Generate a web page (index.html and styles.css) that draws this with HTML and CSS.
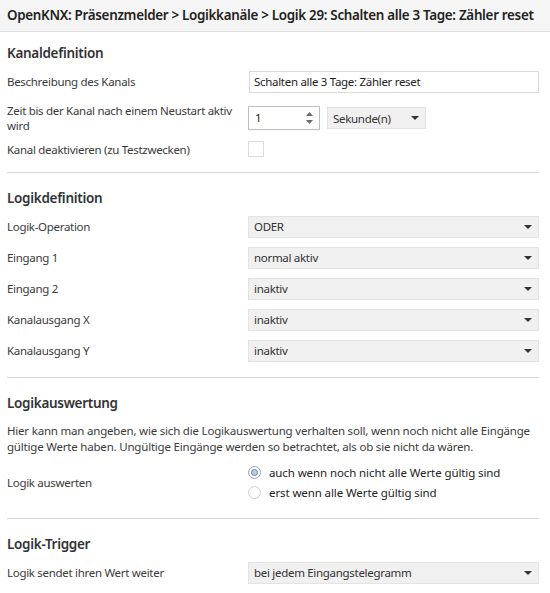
FILE: index.html
```html
<!DOCTYPE html>
<html lang="de">
<head>
<meta charset="utf-8">
<title>OpenKNX Logik 29</title>
<link rel="stylesheet" href="styles.css">
</head>
<body>
<div class="titlebar">OpenKNX: Präsenzmelder &gt; Logikkanäle &gt; Logik 29: Schalten alle 3 Tage: Zähler reset</div>

<div class="section first">
  <div class="heading">Kanaldefinition</div>
  <div class="row">
    <div class="label">Beschreibung des Kanals</div>
    <div class="control"><div class="textbox">Schalten alle 3 Tage: Zähler reset</div></div>
  </div>
  <div class="row tall">
    <div class="label">Zeit bis der Kanal nach einem Neustart aktiv wird</div>
    <div class="control inline">
      <div class="number">
        <span>1</span>
        <span class="spin">
          <svg width="7" height="4" viewBox="0 0 7 4"><polygon points="0,4 7,4 3.5,0" fill="#6b6b6b"/></svg>
          <svg width="7" height="4" viewBox="0 0 7 4"><polygon points="0,0 7,0 3.5,4" fill="#6b6b6b"/></svg>
        </span>
      </div>
      <div class="select small"><span>Sekunde(n)</span><svg class="arrow" width="8" height="4" viewBox="0 0 8 4"><polygon points="0,0 8,0 4,4" fill="#333"/></svg></div>
    </div>
  </div>
  <div class="row check">
    <div class="label">Kanal deaktivieren (zu Testzwecken)</div>
    <div class="control"><div class="checkbox"></div></div>
  </div>
</div>

<div class="section">
  <div class="heading">Logikdefinition</div>
  <div class="row">
    <div class="label">Logik-Operation</div>
    <div class="control"><div class="select"><span>ODER</span><svg class="arrow" width="8" height="4" viewBox="0 0 8 4"><polygon points="0,0 8,0 4,4" fill="#333"/></svg></div></div>
  </div>
  <div class="row">
    <div class="label">Eingang 1</div>
    <div class="control"><div class="select"><span>normal aktiv</span><svg class="arrow" width="8" height="4" viewBox="0 0 8 4"><polygon points="0,0 8,0 4,4" fill="#333"/></svg></div></div>
  </div>
  <div class="row">
    <div class="label">Eingang 2</div>
    <div class="control"><div class="select"><span>inaktiv</span><svg class="arrow" width="8" height="4" viewBox="0 0 8 4"><polygon points="0,0 8,0 4,4" fill="#333"/></svg></div></div>
  </div>
  <div class="row">
    <div class="label">Kanalausgang X</div>
    <div class="control"><div class="select"><span>inaktiv</span><svg class="arrow" width="8" height="4" viewBox="0 0 8 4"><polygon points="0,0 8,0 4,4" fill="#333"/></svg></div></div>
  </div>
  <div class="row">
    <div class="label">Kanalausgang Y</div>
    <div class="control"><div class="select"><span>inaktiv</span><svg class="arrow" width="8" height="4" viewBox="0 0 8 4"><polygon points="0,0 8,0 4,4" fill="#333"/></svg></div></div>
  </div>
</div>

<div class="section eval">
  <div class="heading">Logikauswertung</div>
  <p class="info">Hier kann man angeben, wie sich die Logikauswertung verhalten soll, wenn noch nicht alle Eingänge gültige Werte haben. Ungültige Eingänge werden so betrachtet, als ob sie nicht da wären.</p>
  <div class="row radios">
    <div class="label">Logik auswerten</div>
    <div class="control">
      <div class="radio-opt"><span class="radio on"></span>auch wenn noch nicht alle Werte gültig sind</div>
      <div class="radio-opt"><span class="radio"></span>erst wenn alle Werte gültig sind</div>
    </div>
  </div>
</div>

<div class="section last">
  <div class="heading">Logik-Trigger</div>
  <div class="row">
    <div class="label">Logik sendet ihren Wert weiter</div>
    <div class="control"><div class="select"><span>bei jedem Eingangstelegramm</span><svg class="arrow" width="8" height="4" viewBox="0 0 8 4"><polygon points="0,0 8,0 4,4" fill="#333"/></svg></div></div>
  </div>
</div>
</body>
</html>
```
FILE: styles.css
```css
html, body {
  margin: 0;
  padding: 0;
  background: #ffffff;
}
body {
  font-family: "Noto Sans", "Open Sans", sans-serif;
  font-size: 11.5px;
  letter-spacing: -0.3px;
  color: #3a3a3a;
  width: 550px;
  height: 593px;
  overflow: hidden;
}
.titlebar {
  height: 31px;
  line-height: 31px;
  padding-left: 7px;
  background: #f5f5f5;
  border-bottom: 1px solid #dedede;
  font-size: 13.4px;
  font-weight: 600;
  color: #222;
  white-space: nowrap;
  letter-spacing: -0.3px;
}
.section {
  margin: 0 11px 0 7px;
  padding: 15px 0 11px;
  border-bottom: 1px solid #d6d6d6;
}
.section.first {
  padding-top: 11px;
  padding-bottom: 12px;
}
.section.eval {
  padding-bottom: 16px;
}
.section.last {
  border-bottom: none;
  padding-bottom: 0;
}
.heading {
  height: 20px;
  line-height: 20px;
  font-size: 13.5px;
  font-weight: 600;
  color: #333;
  margin-bottom: 3px;
  letter-spacing: -0.3px;
}
.row {
  display: grid;
  grid-template-columns: 241px 1fr;
  align-items: center;
  height: 31px;
}
.row.tall {
  height: 41px;
}
.row.check {
  height: 22px;
}
.row.radios {
  height: 40px;
  margin-top: 7px;
}
.label {
  line-height: 15px;
  padding-right: 6px;
}
.control {
  min-width: 0;
}
.control.inline {
  display: flex;
  align-items: center;
  gap: 7px;
}
.textbox {
  height: 22px;
  box-sizing: border-box;
  border: 1px solid #dadada;
  margin-left: 1px;
  width: 290px;
  padding-left: 4px;
  line-height: 20px;
  color: #222;
}
.number {
  width: 72px;
  height: 24px;
  box-sizing: border-box;
  border: 1px solid #bdbdbd;
  display: flex;
  align-items: center;
  justify-content: space-between;
  padding: 0 6px 0 6px;
  color: #222;
}
.spin {
  display: flex;
  flex-direction: column;
  gap: 4px;
}
.spin svg {
  display: block;
}
.select {
  height: 22px;
  box-sizing: border-box;
  width: 291px;
  background: #f0f0f0;
  border: 1px solid #e3e3e3;
  display: flex;
  align-items: center;
  justify-content: space-between;
  padding: 0 6px 0 5px;
  color: #333;
}
.select.small {
  width: 99px;
  margin-top: 1px;
}
.arrow {
  display: block;
}
.checkbox {
  width: 16px;
  height: 16px;
  box-sizing: border-box;
  border: 1px solid #dcdcdc;
  background: #fff;
}
.info {
  margin: 10px 0 0;
  line-height: 16px;
  color: #3a3a3a;
  letter-spacing: -0.2px;
}
.radio-opt {
  display: flex;
  align-items: center;
  height: 20px;
  gap: 8px;
  color: #222;
  letter-spacing: -0.1px;
}
.radio {
  width: 13px;
  height: 13px;
  box-sizing: border-box;
  border-radius: 50%;
  border: 1px solid #cfcfcf;
  background: #fff;
  display: flex;
  align-items: center;
  justify-content: center;
}
.radio.on {
  border-color: #8aa3bd;
}
.radio.on::after {
  content: "";
  width: 7px;
  height: 7px;
  box-sizing: border-box;
  border-radius: 50%;
  background: #bccde0;
  border: 1px solid #5f7fa3;
}
```
